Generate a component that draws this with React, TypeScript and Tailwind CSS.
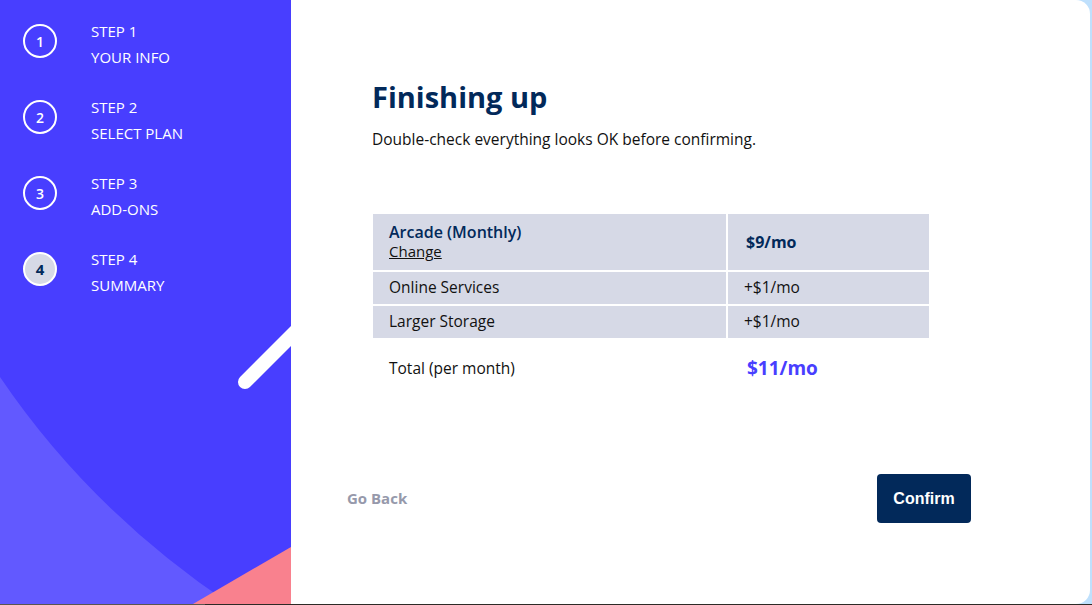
import React from 'react'

const steps = [
    { n: 1, title: 'YOUR INFO' },
    { n: 2, title: 'SELECT PLAN' },
    { n: 3, title: 'ADD-ONS' },
    { n: 4, title: 'SUMMARY' },
]

const addOns = [
    { name: 'Online Services', price: '+$1/mo' },
    { name: 'Larger Storage', price: '+$1/mo' },
]

const font = { fontFamily: '"Open Sans", "Noto Sans", sans-serif' }

function SidebarArt() {
    return (
        <svg className="absolute inset-0" width="291" height="604" viewBox="0 0 291 604" fill="none">
            <path d="M0 377 Q90 510 230 604 L0 604 Z" fill="#6259FF" />
            <path d="M193 604 L291 547 L291 604 Z" fill="#F9818E" />
            <path d="M245 382 L305 322" stroke="#FFFFFF" strokeWidth="14" strokeLinecap="round" />
        </svg>
    )
}

function Step({ n, title, active }: { n: number; title: string; active: boolean }) {
    return (
        <div className="flex items-start">
            <div
                className={
                    active
                        ? 'mt-[6px] flex h-[34px] w-[34px] items-center justify-center rounded-full border-2 border-white bg-[#D6D9E6] text-[15px] font-bold text-[#02295A]'
                        : 'mt-[6px] flex h-[34px] w-[34px] items-center justify-center rounded-full border-2 border-white text-[14px] font-semibold text-white'
                }
            >
                {n}
            </div>
            <div className="ml-[34px] flex flex-col text-[15px] font-medium leading-[26px] text-white">
                <span>STEP {n}</span>
                <span>{title}</span>
            </div>
        </div>
    )
}

export default function App() {
    return (
        <div className="flex h-[605px] w-[1092px] flex-col bg-[#BFE0FC]" style={font}>
            <div className="flex h-[604px]">
                <div className="flex h-full w-[1090px] overflow-hidden rounded-r-[14px] bg-white">
                    {/* sidebar */}
                    <div className="relative h-full w-[291px] shrink-0 bg-[#483EFF]">
                        <SidebarArt />
                        <div className="relative flex flex-col gap-[24px] pl-[23px] pt-[18px]">
                            {steps.map((s) => (
                                <Step key={s.n} n={s.n} title={s.title} active={s.n === 4} />
                            ))}
                        </div>
                    </div>

                    {/* summary */}
                    <div className="flex flex-1 flex-col">
                        <div className="pl-[81px] pt-[75px]">
                            <h1 className="text-[29px] font-bold leading-[44px] text-[#02295A]">Finishing up</h1>
                            <p className="mt-[10px] text-[15.5px] leading-[20px] text-[#111]">
                                Double-check everything looks OK before confirming.
                            </p>

                            <table className="mt-[63px] -ml-[1px] w-[560px] border-separate border-spacing-[2px] text-[15.5px] text-[#111]">
                                <tbody>
                                    <tr className="h-[56px] bg-[#D6D9E6]">
                                        <td className="w-[353px] pl-[16px] align-middle">
                                            <div className="text-[16px] font-semibold leading-[19px] text-[#02295A]">
                                                Arcade (Monthly)
                                            </div>
                                            <div className="text-[15px] leading-[19px] underline">Change</div>
                                        </td>
                                        <td className="pl-[18px] text-[16px] font-bold text-[#02295A]">$9/mo</td>
                                    </tr>
                                    {addOns.map((a) => (
                                        <tr key={a.name} className="h-[32px] bg-[#D6D9E6]">
                                            <td className="pl-[16px]">{a.name}</td>
                                            <td className="pl-[16px]">{a.price}</td>
                                        </tr>
                                    ))}
                                    <tr className="h-[56px]">
                                        <td className="pl-[16px] pt-[2px]">Total (per month)</td>
                                        <td className="pl-[19px] text-[19px] font-bold text-[#483EFF]">$11/mo</td>
                                    </tr>
                                </tbody>
                            </table>
                        </div>

                        <div className="mt-[76px] flex items-center justify-between pl-[56px] pr-[119px]">
                            <span className="text-[15px] font-bold text-[#9699AB]">Go Back</span>
                            <button
                                className="h-[49px] w-[94px] rounded-[4px] bg-[#02295A] text-[16px] font-bold text-white"
                                style={{ fontFamily: '"Liberation Sans", Arial, sans-serif' }}
                            >
                                Confirm
                            </button>
                        </div>
                    </div>
                </div>
            </div>
            <div className="flex h-[1px]">
                <div className="w-[205px] bg-[#5a5650]" />
                <div className="flex-1 bg-[#2d2a26]" />
            </div>
        </div>
    )
}
